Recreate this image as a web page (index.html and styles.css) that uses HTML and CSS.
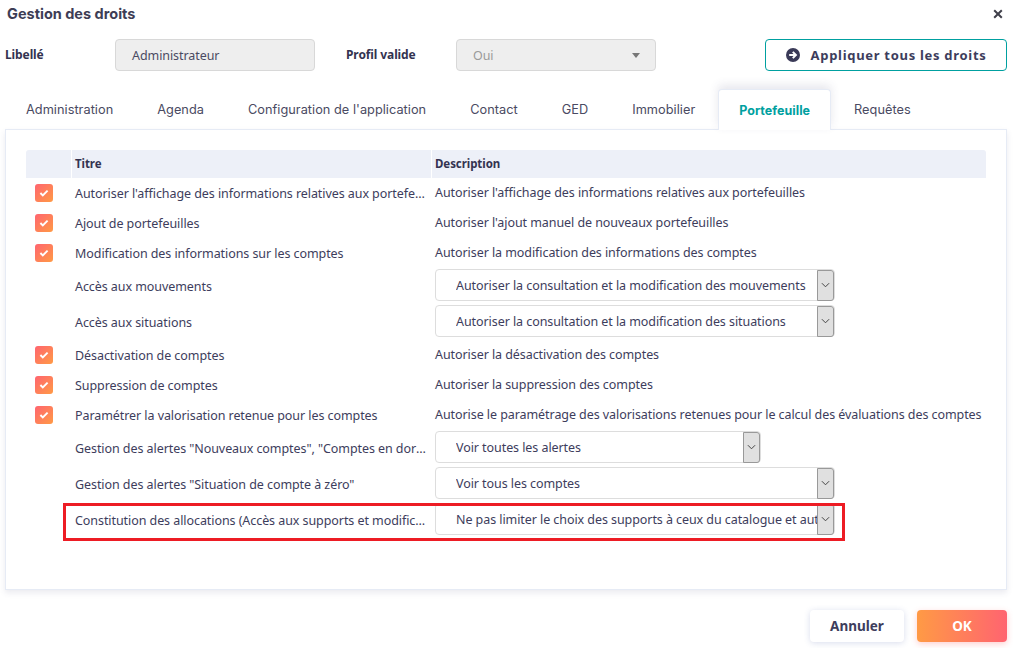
FILE: index.html
```html
<!DOCTYPE html>
<html lang="fr">
<head>
<meta charset="utf-8">
<title>Gestion des droits</title>
<link rel="stylesheet" href="styles.css">
</head>
<body>
<div class="dialog">
  <header class="head">
    <h1 class="title">Gestion des droits</h1>
    <svg class="close" viewBox="0 0 10 10" width="10" height="10"><path d="M1.2 1.2 8.8 8.8M8.8 1.2 1.2 8.8" stroke="#3f3f4a" stroke-width="2" fill="none"/></svg>
  </header>
  <div class="form">
    <label class="lbl lbl-a">Libellé</label>
    <div class="field field-a">Administrateur</div>
    <label class="lbl lbl-b">Profil valide</label>
    <div class="field field-b"><span>Oui</span><i class="caret"></i></div>
    <button class="apply">
      <svg viewBox="0 0 14 14" width="14" height="14"><circle cx="7" cy="7" r="7" fill="#3a3a58"/><path d="M3.2 7h6M6.8 3.9 9.9 7 6.8 10.1" stroke="#fff" stroke-width="2" fill="none"/></svg>
      <span>Appliquer tous les droits</span>
    </button>
  </div>
  <nav class="tabs">
    <a class="tab">Administration</a>
    <a class="tab">Agenda</a>
    <a class="tab">Configuration de l'application</a>
    <a class="tab">Contact</a>
    <a class="tab">GED</a>
    <a class="tab">Immobilier</a>
    <a class="tab active">Portefeuille</a>
    <a class="tab">Requêtes</a>
  </nav>
  <section class="panel">
    <div class="thead"><div></div><div>Titre</div><div>Description</div></div>
    <div class="row"><span class="check"><svg viewBox="0 0 12 10" width="10" height="8"><path d="M1.5 5 4.5 8 10.5 2" stroke="#fff" stroke-width="2.4" fill="none"/></svg></span><div class="t">Autoriser l'affichage des informations relatives aux portefeuilles</div><div class="d">Autoriser l'affichage des informations relatives aux portefeuilles</div></div>
    <div class="row"><span class="check"><svg viewBox="0 0 12 10" width="10" height="8"><path d="M1.5 5 4.5 8 10.5 2" stroke="#fff" stroke-width="2.4" fill="none"/></svg></span><div class="t">Ajout de portefeuilles</div><div class="d">Autoriser l'ajout manuel de nouveaux portefeuilles</div></div>
    <div class="row"><span class="check"><svg viewBox="0 0 12 10" width="10" height="8"><path d="M1.5 5 4.5 8 10.5 2" stroke="#fff" stroke-width="2.4" fill="none"/></svg></span><div class="t">Modification des informations sur les comptes</div><div class="d">Autoriser la modification des informations des comptes</div></div>
    <div class="row tall"><span></span><div class="t">Accès aux mouvements</div><div class="sel w400"><span>Autoriser la consultation et la modification des mouvements</span><b><svg viewBox="0 0 10 6" width="9" height="6"><path d="M1 1 5 5 9 1" stroke="#444" stroke-width="1.1" fill="none"/></svg></b></div></div>
    <div class="row tall"><span></span><div class="t">Accès aux situations</div><div class="sel w400"><span>Autoriser la consultation et la modification des situations</span><b><svg viewBox="0 0 10 6" width="9" height="6"><path d="M1 1 5 5 9 1" stroke="#444" stroke-width="1.1" fill="none"/></svg></b></div></div>
    <div class="row"><span class="check"><svg viewBox="0 0 12 10" width="10" height="8"><path d="M1.5 5 4.5 8 10.5 2" stroke="#fff" stroke-width="2.4" fill="none"/></svg></span><div class="t">Désactivation de comptes</div><div class="d">Autoriser la désactivation des comptes</div></div>
    <div class="row"><span class="check"><svg viewBox="0 0 12 10" width="10" height="8"><path d="M1.5 5 4.5 8 10.5 2" stroke="#fff" stroke-width="2.4" fill="none"/></svg></span><div class="t">Suppression de comptes</div><div class="d">Autoriser la suppression des comptes</div></div>
    <div class="row"><span class="check"><svg viewBox="0 0 12 10" width="10" height="8"><path d="M1.5 5 4.5 8 10.5 2" stroke="#fff" stroke-width="2.4" fill="none"/></svg></span><div class="t">Paramétrer la valorisation retenue pour les comptes</div><div class="d">Autorise le paramétrage des valorisations retenues pour le calcul des évaluations des comptes</div></div>
    <div class="row tall"><span></span><div class="t">Gestion des alertes "Nouveaux comptes", "Comptes en dormance"</div><div class="sel w326"><span>Voir toutes les alertes</span><b><svg viewBox="0 0 10 6" width="9" height="6"><path d="M1 1 5 5 9 1" stroke="#444" stroke-width="1.1" fill="none"/></svg></b></div></div>
    <div class="row tall"><span></span><div class="t">Gestion des alertes "Situation de compte à zéro"</div><div class="sel w400"><span>Voir tous les comptes</span><b><svg viewBox="0 0 10 6" width="9" height="6"><path d="M1 1 5 5 9 1" stroke="#444" stroke-width="1.1" fill="none"/></svg></b></div></div>
    <div class="row tall"><span></span><div class="t">Constitution des allocations (Accès aux supports et modification)</div><div class="sel w400"><span>Ne pas limiter le choix des supports à ceux du catalogue et autoriser</span><b><svg viewBox="0 0 10 6" width="9" height="6"><path d="M1 1 5 5 9 1" stroke="#444" stroke-width="1.1" fill="none"/></svg></b></div></div>
    <div class="mark"></div>
  </section>
  <footer class="foot">
    <button class="btn cancel">Annuler</button>
    <button class="btn ok">OK</button>
  </footer>
</div>
</body>
</html>
```
FILE: styles.css
```css
* { box-sizing: border-box; }
html, body { margin: 0; height: 100%; }
body { background: #fff; color: #3d3d5c; font-family: "Noto Sans", sans-serif; font-size: 12.5px; letter-spacing: -.07px; overflow: hidden; }
.dialog { width: 1013px; height: 648px; display: flex; flex-direction: column; padding: 0 6px 0 5px; }
.head { height: 39px; display: flex; justify-content: space-between; align-items: center; padding: 0 4px 11px 2px; }
.title { margin: -2px 0 0; font: 700 14.5px Inter, sans-serif; letter-spacing: 0; color: #3d3d55; }
.form { display: flex; align-items: center; height: 32px; }
.lbl { font-weight: 700; font-size: 12px; letter-spacing: -.1px; color: #333350; }
.lbl-a { width: 110px; margin-top: -2px; }
.lbl-b { width: 110px; margin-left: 31px; margin-top: -2px; }
.field { height: 32px; background: #eee; border: 1px solid #d8d8d8; border-radius: 4px; display: flex; align-items: center; }
.field-a { width: 200px; padding-left: 16px; color: #4a4a62; }
.field-b { width: 200px; padding: 0 15px 0 16px; color: #9a9a9a; justify-content: space-between; }
.caret { width: 0; height: 0; border: 4px solid transparent; border-top: 5px solid #777; border-bottom: 0; }
.apply { margin-left: auto; width: 242px; height: 32px; background: #fff; border: 1px solid #00a0a0; border-radius: 4px; display: flex; align-items: center; justify-content: center; gap: 11px; font: 700 13px "Noto Sans", sans-serif; letter-spacing: .7px; color: #3d3d5c; padding: 0; }
.tabs { display: flex; margin: 18px 0 0 -1px; height: 40px; position: relative; z-index: 1; }
.tab { display: flex; align-items: center; padding: 0 22px; font: 400 12.75px Inter, sans-serif; letter-spacing: .03px; color: #4a4a62; height: 41px; }
.tab.active { background: #fff; border-radius: 4px 4px 0 0; font-weight: 700; font-size: 12.5px; color: #00a0a0; box-shadow: 0 -4px 10px rgba(60,60,110,.12); border: 1px solid #e6ebf5; border-bottom: 0; padding: 0 20px; margin: 0 1px; }
.panel { position: relative; height: 461px; background: #fff; border: 1px solid #e6ebf5; box-shadow: 0 3px 6px rgba(60,60,110,.1); padding: 20px 20px 0 20px; }
.thead, .row { display: grid; grid-template-columns: 45px 360px 554px; align-items: center; }
.thead { height: 28px; background: #edf0f8; font-weight: 700; font-size: 11.5px; color: #333350; border-radius: 3px 3px 0 0; }
.thead > div { height: 100%; display: flex; align-items: center; padding: 0 0 2px 3px; border-left: 1px solid #fff; }
.thead > div:first-child { border: 0; }
.row { height: 30px; }
.row.tall { height: 36px; }
.t { padding-left: 4px; padding-right: 5px; white-space: nowrap; overflow: hidden; text-overflow: ellipsis; }
.d { padding-left: 4px; white-space: nowrap; margin-top: -2px; }
.check { width: 18px; height: 18px; margin-left: 9px; border-radius: 3px; background: linear-gradient(135deg, #ff6470, #ff9a45); display: flex; align-items: center; justify-content: center; }
.sel { height: 32px; margin: -2px 0 0 4px; border: 1px solid #ddd; border-radius: 4px; display: flex; align-items: center; justify-content: space-between; background: #fff; padding-left: 20px; }
.sel span { flex: 1; white-space: nowrap; overflow: hidden; }
.sel b { flex: none; width: 17px; height: 31px; background: #e0e0e0; border: 1px solid #999; border-radius: 0 3px 3px 0; display: flex; align-items: center; justify-content: center; }
.w400 { width: 400px; }
.w326 { width: 326px; }
.mark { position: absolute; left: 57px; top: 373px; width: 782px; height: 38px; border: 3px solid #ed1c24; pointer-events: none; }
.foot { display: flex; justify-content: flex-end; gap: 13px; margin-top: 20px; }
.btn { width: 94px; height: 32px; border: 0; border-radius: 4px; font: 700 13.5px "Noto Sans", sans-serif; }
.cancel { background: #fff; color: #3d3d5c; box-shadow: 0 1px 6px rgba(60,80,160,.2); }
.ok { width: 90px; color: #fff; background: linear-gradient(90deg, #ff9a45, #ff6470); box-shadow: 0 2px 6px rgba(255,100,100,.3); }
```
